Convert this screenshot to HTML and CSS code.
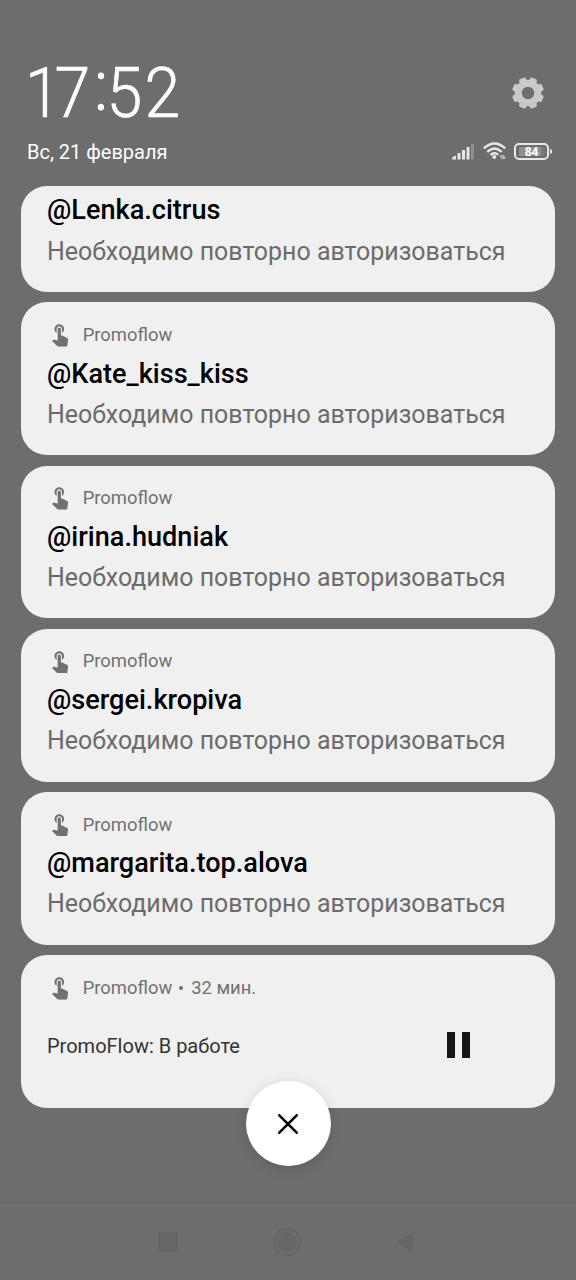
FILE: index.html
```html
<!DOCTYPE html>
<html lang="ru">
<head>
<meta charset="utf-8">
<title>Уведомления</title>
<link rel="stylesheet" href="styles.css">
</head>
<body>
<svg class="defs" aria-hidden="true">
  <symbol id="touch" viewBox="0 0 24 24"><path d="M9 11.24V7.5C9 6.12 10.12 5 11.5 5S14 6.12 14 7.5v3.74c1.21-.81 2-2.18 2-3.74C16 5.01 13.99 3 11.5 3S7 5.01 7 7.5c0 1.56.79 2.93 2 3.74zm9.84 4.63l-4.54-2.26c-.17-.07-.35-.11-.54-.11H13v-6c0-.83-.67-1.5-1.5-1.5S10 6.67 10 7.5v10.74l-3.43-.72c-.08-.01-.15-.03-.24-.03-.31 0-.59.13-.79.33l-.79.8 4.94 4.94c.27.27.65.44 1.06.44h6.79c.75 0 1.33-.55 1.44-1.28l.75-5.27c.01-.07.02-.14.02-.2 0-.62-.38-1.16-.91-1.38z"/></symbol>
</svg>
<div class="screen">
  <header class="header">
    <div class="row row-time">
      <div class="time"><span class="one">1</span>7<span class="colon">:</span>52</div>
      <svg class="gear" viewBox="-16 -16 32 32">
        <defs><mask id="hole"><rect x="-16" y="-16" width="32" height="32" fill="#fff"/><circle r="6.2" fill="#000"/></mask></defs>
        <g mask="url(#hole)" fill="#c9c9c9">
          <circle r="13.300"/>
          <rect x="-3.7" y="-15.9" width="7.4" height="31.8" rx="2" transform="rotate(22.5)"/>
          <rect x="-3.7" y="-15.9" width="7.4" height="31.8" rx="2" transform="rotate(67.5)"/>
          <rect x="-3.7" y="-15.9" width="7.4" height="31.8" rx="2" transform="rotate(112.5)"/>
          <rect x="-3.7" y="-15.9" width="7.4" height="31.8" rx="2" transform="rotate(157.5)"/>
        </g>
      </svg>
    </div>
    <div class="row row-date">
      <div class="date">Вс, 21 февраля</div>
      <div class="status">
        <svg class="signal" viewBox="0 0 22 17"><g fill="#e6e6e6"><path d="M0 16.5v-1.5q0-1 4-2.600v4.100z"/><rect x="5.500" y="10" width="3" height="6.500"/><rect x="10" y="7" width="3" height="9.500"/><rect x="14.500" y="4" width="3" height="12.500"/></g><rect x="19" y="1" width="2.800" height="15.500" fill="#919191"/></svg>
        <svg class="wifi" viewBox="0 0 24 18"><g fill="none" stroke="#e8e8e8" stroke-width="2.400"><path d="M.8 6.300Q11.500-3.500 22.200 6.300M4.300 9.800Q11.500 3.200 18.700 9.800M7.600 13Q11.500 9.500 15.200 12.800"/></g><circle cx="11.300" cy="15" r="1.900" fill="#e8e8e8"/><path d="M17 15.200l1.900-2.200v4.200M20.800 13v4l1.600-2" fill="none" stroke="#dcdcdc" stroke-width="1"/></svg>
        <div class="battery"><span class="level">84</span></div>
      </div>
    </div>
  </header>

  <main class="list">
    <article class="card card-cut">
      <h2 class="title">@Lenka.citrus</h2>
      <p class="text">Необходимо повторно авторизоваться</p>
    </article>
    <article class="card">
      <div class="app"><svg class="touch"><use href="#touch"/></svg><span>Promoflow</span></div>
      <h2 class="title">@Kate_kiss_kiss</h2>
      <p class="text">Необходимо повторно авторизоваться</p>
    </article>
    <article class="card">
      <div class="app"><svg class="touch"><use href="#touch"/></svg><span>Promoflow</span></div>
      <h2 class="title">@irina.hudniak</h2>
      <p class="text">Необходимо повторно авторизоваться</p>
    </article>
    <article class="card">
      <div class="app"><svg class="touch"><use href="#touch"/></svg><span>Promoflow</span></div>
      <h2 class="title">@sergei.kropiva</h2>
      <p class="text">Необходимо повторно авторизоваться</p>
    </article>
    <article class="card">
      <div class="app"><svg class="touch"><use href="#touch"/></svg><span>Promoflow</span></div>
      <h2 class="title">@margarita.top.alova</h2>
      <p class="text">Необходимо повторно авторизоваться</p>
    </article>
    <article class="card">
      <div class="app"><svg class="touch"><use href="#touch"/></svg><span>Promoflow</span><span class="dot"></span><span>32 мин.</span></div>
      <div class="work"><span>PromoFlow: В работе</span><span class="pause"></span></div>
    </article>
    <button class="close" aria-label="Закрыть"><svg viewBox="0 0 20 20"><path d="M1.300 1.300l17.400 17.400M18.700 1.300L1.300 18.700" fill="none" stroke="#000" stroke-width="2.600" stroke-linecap="round"/></svg></button>
  </main>

  <nav class="nav">
    <span class="recent"></span>
    <span class="home"></span>
    <svg class="back" viewBox="0 0 18 20"><path d="M0 10L17.500 0v20z" fill="#666"/></svg>
  </nav>
</div>
</body>
</html>
```
FILE: styles.css
```css
* { box-sizing: border-box; margin: 0; padding: 0; }
body { font-family: Roboto, "Noto Sans", sans-serif; background: #6d6d6d; }
.defs { display: none; }
.screen { width: 576px; height: 1280px; display: flex; flex-direction: column; overflow: hidden; }
.header { height: 186.3px; flex: none; padding: 60px 25px 0 27px; }
.row { display: flex; justify-content: space-between; align-items: center; }
.row-time { height: 66px; padding-right: 7px; }
.time { font-size: 70px; line-height: 66px; height: 66px; font-weight: 300; color: #fff; letter-spacing: 2.5px; margin-left: -2px; transform: scaleX(.92); transform-origin: 0 0; -webkit-text-stroke: .6px #fff; }
.one { letter-spacing: -6.8px; }
.colon { display: inline-block; transform: translateY(-7px); margin-left: 2px; letter-spacing: -1.500px; -webkit-text-stroke: 1px #fff; }
.gear { width: 32px; height: 32px; }
.row-date { height: 28px; margin-top: 12px; }
.date { font-size: 20px; line-height: 28px; color: #fff; }
.status { display: flex; align-items: center; margin-top: -2px; }
.signal { width: 22px; height: 17px; }
.wifi { width: 24px; height: 18px; margin-left: 9px; }
.battery { position: relative; width: 35px; height: 17px; margin: 0 2px 0 7px; border: 2px solid #e8e8e8; border-radius: 5px; display: flex; align-items: center; justify-content: center; }
.battery::after { content: ""; position: absolute; right: -4.500px; top: 4px; width: 2px; height: 5px; background: #e8e8e8; border-radius: 0 2px 2px 0; }
.level { width: 26px; height: 9px; background: linear-gradient(90deg, #8f8f8f 84%, #787878 84%); color: #fff; font-family: "Open Sans", sans-serif; font-size: 12px; line-height: 9px; font-weight: 700; text-align: center; }

.list { position: relative; flex: none; width: 534px; margin-left: 21px; display: flex; flex-direction: column; gap: 10.500px; }
.card { height: 152.700px; background: #f0f0f0; border-radius: 26px; padding: 18px 26px 0; overflow: hidden; }
.card-cut { height: 105.700px; padding-top: 6px; }
.app { height: 28px; display: flex; align-items: center; color: #717171; font-size: 18.400px; }
.touch { width: 25.700px; height: 25.700px; fill: #717171; margin: -1px 10px 0 0; }
.dot { width: 4px; height: 4px; border-radius: 50%; background: #717171; margin: 1px 8px 0 7px; }
.title { font-size: 27.100px; line-height: 36px; font-weight: 500; color: #000; margin-top: 7.200px; white-space: nowrap; }
.card-cut .title { margin-top: 0; }
.text { font-size: 24.950px; line-height: 36px; color: #6b6b6b; margin-top: 5px; white-space: nowrap; }
.card-cut .text { margin-top: 5.400px; }
.work { height: 40px; margin-top: 25px; display: flex; align-items: center; justify-content: space-between; padding-right: 59px; font-size: 20px; color: #333; }
.pause { width: 23px; height: 26px; margin-top: -2px; border: solid #161616; border-width: 0 8.500px; }
.close { position: absolute; left: 224.500px; top: 895px; width: 85px; height: 85px; border: 0; border-radius: 50%; background: #fff; box-shadow: 0 3px 14px rgba(0,0,0,.13); display: flex; align-items: center; justify-content: center; }
.close svg { width: 20px; height: 20px; margin-right: 1px; }

.nav { margin-top: auto; height: 78px; flex: none; border-top: 2px solid #686868; display: flex; align-items: center; padding: 0 162px 0 158px; justify-content: space-between; }
.recent { width: 20px; height: 20px; background: #666; }
.home { width: 28px; height: 28px; border: 2px solid #666; border-radius: 50%; background: radial-gradient(circle, #666 9.500px, transparent 10px); }
.back { width: 18px; height: 20px; }
```
